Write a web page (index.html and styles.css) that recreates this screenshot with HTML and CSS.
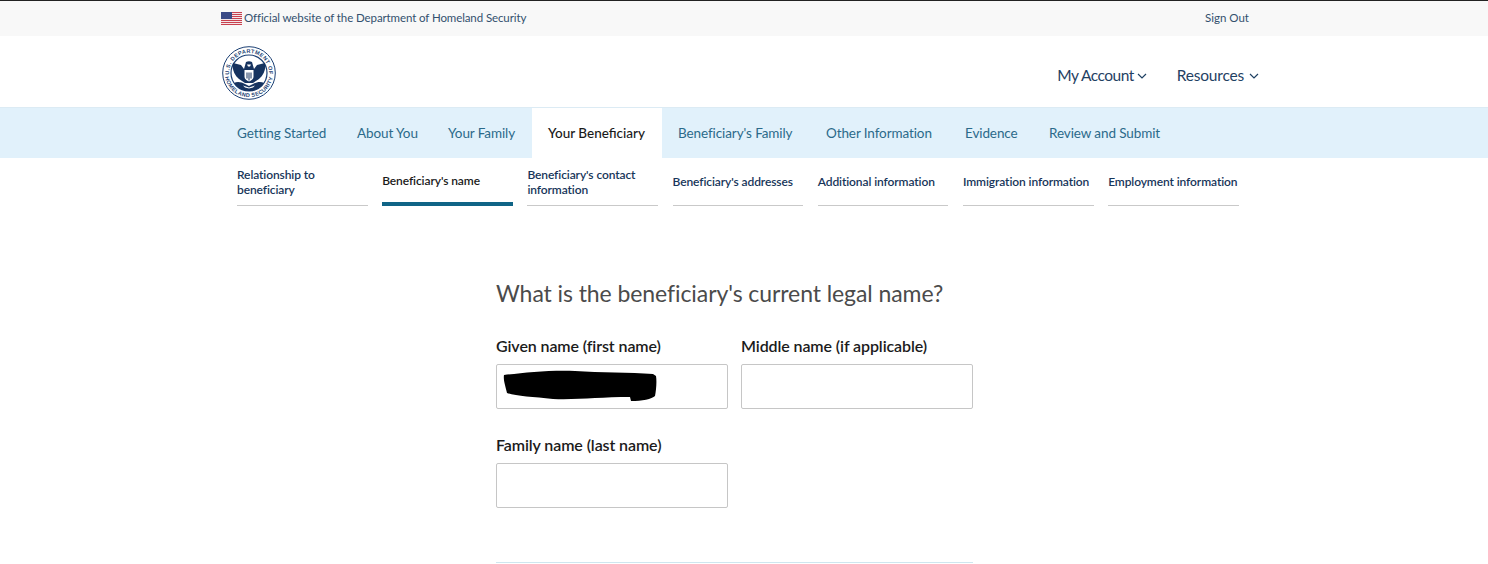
FILE: index.html
```html
<!DOCTYPE html>
<html lang="en">
<head>
<meta charset="utf-8">
<title>Your Beneficiary</title>
<link rel="stylesheet" href="styles.css">
</head>
<body>
<div class="utility">
  <div class="wrap utility-row">
    <div class="official">
      <svg class="flag" viewBox="0 0 21 13" width="21" height="13" aria-hidden="true">
        <rect width="21" height="13" fill="#c9414f"/>
        <path d="M0 1.5H21M0 3.5H21M0 5.5H21M0 7.5H21M0 9.5H21M0 11.5H21" stroke="#f3e6e8" stroke-width="1"/>
        <rect width="11" height="7" fill="#3a4a86"/>
      </svg>
      <span>Official website of the Department of Homeland Security</span>
    </div>
    <a class="signout" href="#">Sign Out</a>
  </div>
</div>
<header class="masthead">
  <div class="wrap masthead-row">
    <svg class="seal" viewBox="0 0 54 54" width="54" height="54" aria-label="DHS seal">
      <defs>
        <path id="arcTop" d="M7 27a20 20 0 0 1 40 0"/>
        <path id="arcBot" d="M2.800 27a24.200 24.200 0 0 0 48.400 0"/>
      </defs>
      <circle cx="27" cy="27" r="26.300" fill="#fff" stroke="#1b3f73" stroke-width="1"/>
      <circle cx="27" cy="27" r="18" fill="#fff" stroke="#1b3f73" stroke-width="1.200"/>
      <text class="seal-text"><textPath href="#arcTop" startOffset="50%" text-anchor="middle">U.S. DEPARTMENT OF</textPath></text>
      <text class="seal-text"><textPath href="#arcBot" startOffset="50%" text-anchor="middle">HOMELAND SECURITY</textPath></text>
      <path d="M11 17l8 2 3 4 2-7c2-1 4-1 6 0l2 7 3-4 8-2c1 6-1 12-6 16l-6 4H23l-6-4c-5-4-7-10-6-16z" fill="#16335f"/>
      <path d="M22.500 24h9v7c0 2-2.500 3.500-4.500 4.500-2-1-4.500-2.500-4.500-4.500z" fill="#fff"/>
      <path d="M25 26.500v6M27 26.500v8M29 26.500v6" stroke="#16335f" stroke-width="1"/>
      <path d="M25 18.500h4l-1 2h-2z" fill="#fff"/>
      <path d="M12 37c3-2 8-1 11 1l4 2 4-2c3-2 8-3 11-1-3 5-9 8-15 8s-12-3-15-8z" fill="#16335f"/>
      <path d="M21 39.500l6 2 6-2-2 2-4 1-4-1z" fill="#fff"/>
    </svg>
    <nav class="account">
      <a class="account-link account-my" href="#">My Account<svg class="chev" viewBox="0 0 10 6" width="10" height="6"><path d="M1 1l4 4 4-4" fill="none" stroke="#1f4163" stroke-width="1.200"/></svg></a>
      <a class="account-link account-res" href="#">Resources<svg class="chev" viewBox="0 0 10 6" width="10" height="6"><path d="M1 1l4 4 4-4" fill="none" stroke="#1f4163" stroke-width="1.200"/></svg></a>
    </nav>
  </div>
</header>
<nav class="tabs">
  <div class="wrap tabs-row">
    <a class="tab" href="#">Getting Started</a>
    <a class="tab" href="#">About You</a>
    <a class="tab" href="#">Your Family</a>
    <a class="tab tab-active" href="#">Your Beneficiary</a>
    <a class="tab" href="#">Beneficiary's Family</a>
    <a class="tab" href="#">Other Information</a>
    <a class="tab" href="#">Evidence</a>
    <a class="tab" href="#">Review and Submit</a>
  </div>
</nav>
<nav class="steps">
  <a class="step" href="#">Relationship to beneficiary</a>
  <a class="step step-active" href="#">Beneficiary's name</a>
  <a class="step" href="#">Beneficiary's contact information</a>
  <a class="step" href="#">Beneficiary's addresses</a>
  <a class="step" href="#">Additional information</a>
  <a class="step" href="#">Immigration information</a>
  <a class="step" href="#">Employment information</a>
</nav>
<main class="form">
  <h1 class="title">What is the beneficiary's current legal name?</h1>
  <div class="fields">
    <div class="field">
      <label class="label" for="given">Given name (first name)</label>
      <div class="input-wrap">
        <input class="input" id="given" type="text">
        <svg class="redact" viewBox="0 0 154 32" width="154" height="32" aria-hidden="true"><path d="M1 5C20 3 45 0 72 1c25 2 55 1 78 3l3 2c1 6 0 15-1 20-3 3-13 5-24 5l-1-4c-30 0-52 3-77 2C30 27 12 26 4 23 3 18 0 10 1 5z" fill="#000"/></svg>
      </div>
    </div>
    <div class="field">
      <label class="label" for="middle">Middle name (if applicable)</label>
      <input class="input" id="middle" type="text">
    </div>
    <div class="field">
      <label class="label" for="family">Family name (last name)</label>
      <input class="input" id="family" type="text">
    </div>
  </div>
  <hr class="rule">
</main>
</body>
</html>
```
FILE: styles.css
```css
* { box-sizing: border-box; }
html, body { margin: 0; height: 564px; overflow: hidden; }
body { background: #fff; font-family: Lato, "Noto Sans", "Liberation Sans", sans-serif; color: #212121; }
a { text-decoration: none; }
.wrap { width: 1040px; margin-left: 221px; }

.utility { height: 36px; background: #f8f8f8; border-top: 1px solid #222; }
.utility-row { display: flex; justify-content: space-between; align-items: center; height: 33px; }
.official { display: flex; align-items: center; gap: 2px; font-size: 11.5px; letter-spacing: -0.1px; color: #33506e; }
.flag { display: block; margin-top: 1px; }
.signout { font-size: 11.5px; color: #33506e; margin-right: 12px; }

.masthead { height: 72px; background: #fff; border-bottom: 1px solid #dcebf4; }
.masthead-row { display: flex; justify-content: space-between; align-items: center; height: 71px; }
.seal { display: block; margin-left: 1px; margin-top: 3px; }
.seal-text { font-family: "Liberation Sans", sans-serif; font-size: 5.5px; fill: #1b3f73; font-weight: 700; letter-spacing: 0.35px; }
.account { display: flex; gap: 30px; margin-right: 2px; margin-top: 6px; }
.account-link { display: flex; align-items: center; font-size: 15.5px; color: #1f4163; }
.account-my { gap: 3px; letter-spacing: -0.5px; }
.account-res { gap: 5px; letter-spacing: -0.2px; }
.chev { margin-top: 2px; }

.tabs { height: 50px; background: #e1f1fb; }
.tabs-row { display: grid; grid-template-columns: 120px 91px 100px 130px 148px 139px 84px 145px; height: 50px; }
.tab { display: flex; align-items: center; padding: 0 16px; font-size: 13.5px; letter-spacing: -0.1px; white-space: nowrap; color: #2b6a8a; }
.tab-active { background: #fff; color: #1a1a1a; font-weight: 500; letter-spacing: 0; }

.steps { display: grid; grid-template-columns: repeat(7, 130.7px); column-gap: 14.5px; margin-left: 237px; height: 48px; }
.step { display: flex; align-items: center; font-size: 12px; line-height: 15px; font-weight: 600; letter-spacing: -0.1px; color: #17365a; border-bottom: 1px solid #c9c9c9; padding-top: 2px; padding-bottom: 2px; }
.step-active { color: #1a1a1a; border-bottom: 4px solid #0f6486; }

.form { width: 477px; margin: 72px 0 0 496px; }
.title { margin: 0; font-size: 23px; line-height: 30px; font-weight: 400; letter-spacing: -0.08px; color: #4b4b4b; }
.fields { display: grid; grid-template-columns: 232px 232px; column-gap: 13px; row-gap: 26px; margin-top: 28px; }
.field { display: flex; flex-direction: column; gap: 9px; }
.label { font-size: 16px; line-height: 19px; font-weight: 600; letter-spacing: -0.1px; color: #1b1b1b; }
.input-wrap { position: relative; height: 45px; }
.input { display: block; width: 100%; height: 45px; background: #fff; border: 1px solid #c6c6c6; border-radius: 2px; padding: 0 8px; }
.redact { position: absolute; left: 7px; top: 6px; }
.rule { height: 0; margin: 54px 0 0; border: 0; border-top: 1px solid #cfe6ef; }
```
